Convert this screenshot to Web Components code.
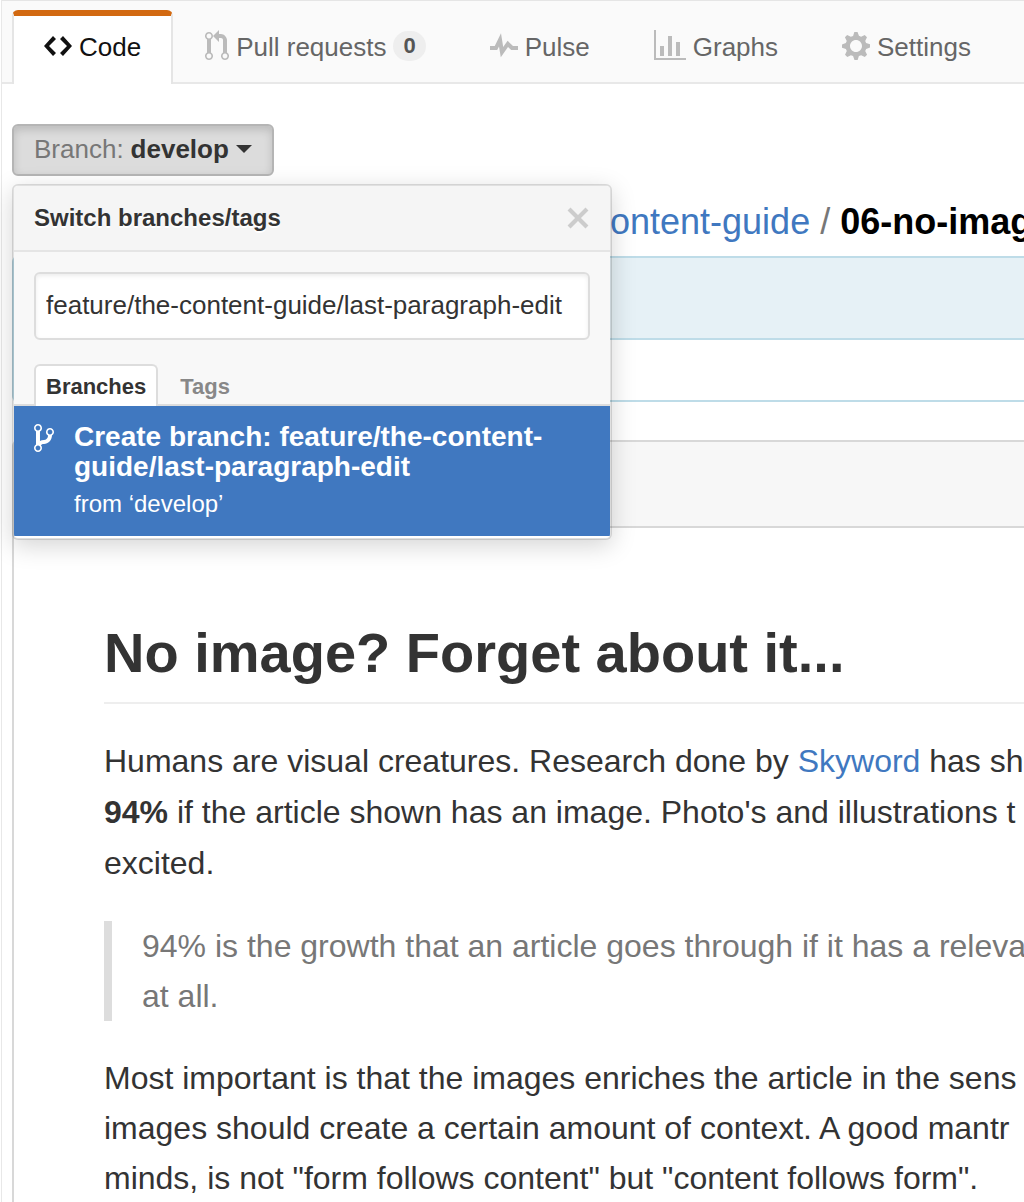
<!DOCTYPE html>
<html lang="en">
<head>
<meta charset="utf-8">
<title>No image? Forget about it...</title>
<style>
  body { margin: 0; background: #fff; color: #333; font-family: "Liberation Sans", Arial, sans-serif; overflow-x: hidden; }
  file-view a { color: #4078c0; text-decoration: none; }
</style>
</head>
<body>
<repo-page>
  <repo-nav slot="nav">
    <repo-tab icon="code" selected>Code</repo-tab>
    <repo-tab icon="pull" count="0">Pull requests</repo-tab>
    <repo-tab icon="pulse">Pulse</repo-tab>
    <repo-tab icon="graph">Graphs</repo-tab>
    <repo-tab icon="gear">Settings</repo-tab>
  </repo-nav>
  <branch-select branch="develop">
    <branch-menu heading="Switch branches/tags" query="feature/the-content-guide/last-paragraph-edit">
      <branch-create source="develop">Create branch: feature/the-content-guide/last-paragraph-edit</branch-create>
    </branch-menu>
  </branch-select>
  <path-crumbs folder="ontent-guide" file="06-no-imag"></path-crumbs>
  <commit-tease></commit-tease>
  <file-view>
    <h1>No image? Forget about it...</h1>
    <p class="lead">Humans are visual creatures. Research done by <a href="#skyword">Skyword</a> has sh<br><strong>94%</strong> if the article shown has an image. Photo's and illustrations t<br>excited.</p>
    <blockquote>94% is the growth that an article goes through if it has a releva<br>at all.</blockquote>
    <p>Most important is that the images enriches the article in the sens<br>images should create a certain amount of context. A good mantr<br>minds, is not "form follows content" but "content follows form".</p>
  </file-view>
</repo-page>

<script>
const ICONS = {
  code: [14, 'M9.5 3L8 4.5 11.5 8 8 11.5 9.5 13 14 8 9.5 3zm-5 0L0 8l4.5 5L6 11.5 2.5 8 6 4.5 4.5 3z'],
  pull: [12, 'M11 11.28V5c-.03-.78-.34-1.47-.94-2.06C9.46 2.35 8.78 2.03 8 2H7V0L4 3l3 3V4h1c.27.02.48.11.69.31.21.2.3.42.31.69v6.28A1.993 1.993 0 0 0 10 15a1.993 1.993 0 0 0 1-3.72zm-1 2.92c-.66 0-1.2-.55-1.2-1.2 0-.65.55-1.2 1.2-1.2.65 0 1.2.55 1.2 1.2 0 .65-.55 1.2-1.2 1.2zM4 3c0-1.11-.89-2-2-2a1.993 1.993 0 0 0-1 3.72v6.56A1.993 1.993 0 0 0 2 15a1.993 1.993 0 0 0 1-3.72V4.72c.59-.34 1-.98 1-1.72zm-.8 10c0 .66-.55 1.2-1.2 1.2-.65 0-1.2-.55-1.2-1.2 0-.65.55-1.2 1.2-1.2.65 0 1.2.55 1.2 1.2zM2 4.2C1.34 4.2.8 3.65.8 3c0-.65.55-1.2 1.2-1.2.65 0 1.2.55 1.2 1.2 0 .65-.55 1.2-1.2 1.2z'],
  pulse: [14, 'M11.5 8L8.8 5.4 6.6 8.5 5.5 1.6 2.38 8H0v2h3.6l.9-1.8.9 5.4L9 8.5l1.6 1.5H14V8h-2.5z'],
  graph: [16, 'M16 14v1H0V0h1v14h15zM5 13H3V8h2v5zm4 0H7V3h2v10zm4 0h-2V6h2v7z'],
  gear: [14, 'M14 8.77v-1.6l-1.94-.64-.45-1.09.88-1.84-1.13-1.13-1.81.91-1.09-.45-.69-1.92h-1.6l-.63 1.94-1.11.45-1.84-.88-1.13 1.13.91 1.81-.45 1.09L0 7.23v1.59l1.94.64.45 1.09-.88 1.84 1.13 1.13 1.81-.91 1.09.45.69 1.92h1.59l.63-1.94 1.11-.45 1.84.88 1.13-1.13-.92-1.81.47-1.09L14 8.75v.02zM7 11c-1.66 0-3-1.34-3-3s1.34-3 3-3 3 1.34 3 3-1.34 3-3 3z'],
  branch: [10, 'M10 5c0-1.11-.89-2-2-2a1.993 1.993 0 0 0-1 3.72v.3c-.02.52-.23.98-.63 1.38-.4.4-.86.61-1.38.63-.83.02-1.48.16-2 .45V4.72a1.993 1.993 0 0 0-1-3.72C.88 1 0 1.89 0 3a2 2 0 0 0 1 1.72v6.56c-.59.35-1 .99-1 1.72 0 1.11.89 2 2 2 1.11 0 2-.89 2-2 0-.53-.2-1-.53-1.36.09-.06.48-.41.59-.47.25-.11.56-.17.94-.17 1.05-.05 1.95-.45 2.75-1.25S8.95 7.77 9 6.73h-.02C9.59 6.37 10 5.73 10 5zM2 1.8c.66 0 1.2.55 1.2 1.2 0 .65-.55 1.2-1.2 1.2C1.35 4.2.8 3.65.8 3c0-.65.55-1.2 1.2-1.2zm0 12.41c-.66 0-1.2-.55-1.2-1.2 0-.65.55-1.2 1.2-1.2.65 0 1.2.55 1.2 1.2 0 .65-.55 1.2-1.2 1.2zm6-8c-.66 0-1.2-.55-1.2-1.2 0-.65.55-1.2 1.2-1.2.65 0 1.2.55 1.2 1.2 0 .65-.55 1.2-1.2 1.2z'],
  close: [12, 'M7.48 8l3.75 3.75-1.48 1.48L6 9.48l-3.75 3.75-1.48-1.48L4.52 8 .77 4.25l1.48-1.48L6 6.52l3.75-3.75 1.48 1.48z']
};

// Registers an element whose open shadow root is filled from a render function.
function define(name, render) {
  customElements.define(name, class extends HTMLElement {
    connectedCallback() {
      if (this.shadowRoot) return;
      const t = document.createElement('template');
      t.innerHTML = '<style>:host,*{box-sizing:border-box}</style>' + render(this);
      this.attachShadow({ mode: 'open' }).append(t.content.cloneNode(true));
    }
  });
}
const attr = (el, n) => el.getAttribute(n) || '';

define('oct-icon', el => {
  const [w, d] = ICONS[attr(el, 'name')];
  return `<style>:host{display:block;flex:none}svg{display:block}</style>
  <svg width="${w * 2}" height="32" viewBox="0 0 ${w} 16" fill="currentColor" aria-hidden="true"><path fill-rule="evenodd" d="${d}"/></svg>`;
});

define('repo-page', () => `
<style>
  :host{display:block;overflow:hidden}
  .page{margin-left:1px;border-left:1px solid #e8e8e8;min-height:100vh}
  main{display:flex;flex-direction:column;padding:40px 0 0 10px}
</style>
<div class="page"><slot name="nav"></slot><main><slot></slot></main></div>`);

define('repo-nav', () => `
<style>
  :host{display:block}
  nav{display:flex;height:84px;padding:9px 0 0 10px;background:#fafafa;border-top:1px solid #e5e5e5;box-shadow:inset 0 -2px #e8e8e8}
</style>
<nav aria-label="Repository"><slot></slot></nav>`);

define('repo-tab', el => `
<style>
  :host{display:flex;flex:none}
  a{display:flex;align-items:center;gap:7px;padding:0 30px 8px;border:solid transparent;border-width:6px 2px 0;color:#666;font-size:26px;line-height:32px;white-space:nowrap;text-decoration:none}
  oct-icon{color:#bbb}
  span{padding-top:1px}
  :host([selected]) a{color:#111;background:#fff;border-color:#d26911 #e5e5e5;border-radius:6px 6px 0 0}
  :host([selected]) oct-icon{color:#111}
  .count{padding:0 10px;border-radius:15px;background:#eee;color:#555;font-size:22px;font-weight:bold;line-height:30px}
  a{padding-bottom:8px}
  oct-icon,span{margin-top:-6px}
  a{padding-bottom:2px}
</style>
<a href="#${attr(el, 'icon')}"><oct-icon name="${attr(el, 'icon')}"></oct-icon><span><slot></slot></span>${el.hasAttribute('count') ? `<span class="count">${attr(el, 'count')}</span>` : ''}</a>`);

define('branch-select', el => `
<style>
  :host{display:flex;position:relative;z-index:1}
  button{display:flex;align-items:center;gap:7px;height:52px;padding:0 20px 2px;border:2px solid #b5b5b5;border-radius:6px;background:#dcdcdc;box-shadow:inset 0 4px 8px rgba(0,0,0,.15);color:#333;font:bold 26px/32px "Liberation Sans",Arial,sans-serif;white-space:nowrap}
  i{font-style:normal;font-weight:normal;color:#777}
  .caret{border:8px solid transparent;border-top-color:#333;border-bottom-width:0}
  ::slotted(*){position:absolute;top:60px;left:0}
</style>
<button type="button" aria-haspopup="true" aria-expanded="true"><i>Branch:</i><span>${attr(el, 'branch')}</span><span class="caret"></span></button>
<slot></slot>`);

define('branch-menu', el => `
<style>
  :host{display:block;width:600px;border:2px solid rgba(0,0,0,.12);border-radius:6px;background:#fff;background-clip:padding-box;box-shadow:0 6px 24px rgba(0,0,0,.17);overflow:hidden}
  header{display:flex;align-items:center;justify-content:space-between;height:66px;padding:0 20px;background:#f5f5f5;border-bottom:2px solid #e5e5e5;font-size:24px;font-weight:bold;line-height:32px;text-shadow:0 2px #fff}
  button{margin:0;padding:0;border:0;background:none;font:inherit;color:inherit}
  .close{color:#ccc}
  .filters{padding:20px 20px 0;background:#f8f8f8;box-shadow:inset 0 -2px #ddd}
  input{display:block;width:100%;height:68px;padding:0 10px 2px;border:2px solid #ddd;border-radius:6px;outline:0;background:#fff;box-shadow:inset 0 2px 4px rgba(0,0,0,.075);color:#333;font:26px "Liberation Sans",Arial,sans-serif}
  .tabs{display:flex;margin-top:24px}
  .tabs button{height:42px;padding:2px 10px 0;border:2px solid transparent;border-bottom:0;border-radius:6px 6px 0 0;color:#888;font-size:22px;font-weight:bold;line-height:32px}
  .tabs button[aria-selected=true]{background:#fff;border-color:#ddd;color:#333}
  .tabs button + button{margin-left:10px}
  ::slotted(*){margin-bottom:2px}
</style>
<header><span>${attr(el, 'heading')}</span><button class="close" type="button" aria-label="Close"><oct-icon name="close"></oct-icon></button></header>
<div class="filters">
  <input type="text" aria-label="Find or create a branch" value="${attr(el, 'query')}">
  <div class="tabs" role="tablist"><button type="button" role="tab" aria-selected="true">Branches</button><button type="button" role="tab" aria-selected="false">Tags</button></div>
</div>
<slot></slot>`);

define('branch-create', el => `
<style>
  :host{display:block}
  button{display:flex;align-items:flex-start;gap:20px;width:100%;padding:16px 20px;border:0;background:#4078c0;color:#fff;font-family:inherit;text-align:left}
  .name{display:block;font-size:28px;font-weight:bold;line-height:30px}
  .from{display:block;margin-top:6px;font-size:24px;line-height:32px}
</style>
<button type="button"><oct-icon name="branch"></oct-icon><span><span class="name"><slot></slot></span><span class="from">from ‘${attr(el, 'source')}’</span></span></button>`);

define('path-crumbs', el => `
<style>
  :host{display:flex;gap:10px;margin-top:24px;padding-left:598px;font-size:36px;line-height:44px;white-space:nowrap;color:#777}
  a{color:#4078c0;text-decoration:none}
  strong{color:#000}
</style>
<a href="#folder">${attr(el, 'folder')}</a><span>/</span><strong>${attr(el, 'file')}</strong>`);

define('commit-tease', () => `
<style>
  :host{display:block;margin-top:12px;border:solid #bedce8;border-width:2px 0 2px 2px;border-radius:6px 0 0 6px}
  .message{height:82px;background:#e6f1f6;border-bottom:2px solid #bedce8}
  .contributors{height:60px}
</style>
<div class="message"></div><div class="contributors"></div>`);

define('file-view', () => `
<style>
  :host{display:block;margin-top:38px;border:solid #d8d8d8;border-width:2px 0 0 2px;border-radius:6px 0 0 0}
  .bar{height:86px;background:#f7f7f7;border-bottom:2px solid #d8d8d8}
  article{padding:90px 0 20px 90px;font-size:32px;line-height:50px;white-space:nowrap}
  ::slotted(*){margin:0 0 32px}
  ::slotted(h1){padding-bottom:14px;border-bottom:2px solid #eee;font-size:56px;line-height:70px}
  ::slotted(.lead){line-height:51px}
  ::slotted(blockquote){padding-left:30px;border-left:8px solid #ddd;color:#777}
</style>
<div class="bar"></div><article><slot></slot></article>`);
</script>
</body>
</html>
